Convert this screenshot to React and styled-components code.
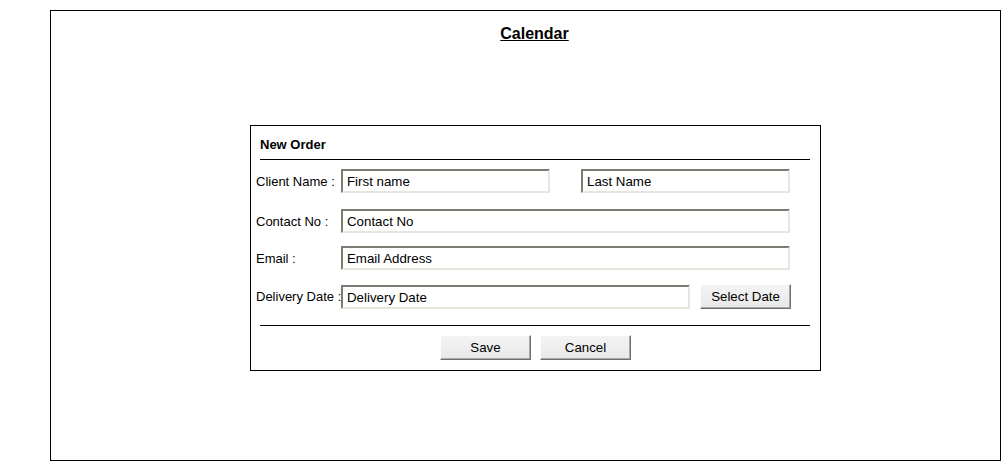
import React from "react";
import styled, { createGlobalStyle } from "styled-components";

const Global = createGlobalStyle`
  html, body { margin: 0; padding: 0; background: #fff; }
  body { font-family: "Liberation Sans", Arial, sans-serif; color: #000; }
  * { box-sizing: border-box; }
`;

const Page = styled.div`
  padding: 10px 0 0 50px;
`;

const Frame = styled.div`
  width: 951px;
  height: 451px;
  border: 1px solid #000;
  padding-left: 199px;
`;

const Column = styled.div`
  width: 571px;
`;

const Title = styled.h1`
  margin: 13px 0 0 -2px;
  font-size: 16px;
  line-height: 19px;
  font-weight: bold;
  text-decoration: underline;
  text-align: center;
`;

const Panel = styled.div`
  margin-top: 82px;
  width: 571px;
  height: 246px;
  border: 1px solid #000;
`;

const Heading = styled.div`
  margin: 0 10px 0 9px;
  padding: 11px 0 6px 0;
  font-size: 13px;
  line-height: 16px;
  font-weight: bold;
  border-bottom: 1px solid #000;
`;

const Rule = styled.div`
  margin: ${(p) => p.$top}px 10px 0 9px;
  border-top: 1px solid #000;
`;

const Row = styled.div`
  display: flex;
  align-items: center;
  margin-top: ${(p) => p.$top}px;
  padding-left: 5px;
`;

const Label = styled.label`
  width: 85px;
  flex: none;
  font-size: 13px;
  white-space: nowrap;
`;

const Field = styled.input`
  width: ${(p) => p.$w}px;
  height: 24px;
  margin-left: ${(p) => p.$gap || 0}px;
  padding: 1px 0 0 4px;
  border: 2px solid;
  border-color: #7b7b74 #e6e6dc #e6e6dc #7b7b74;
  background: #fff;
  font-family: "Liberation Sans", Arial, sans-serif;
  font-size: 13.3px;
  color: #000;
  outline: none;
`;

const Button = styled.button`
  width: 91px;
  height: 25px;
  margin-left: ${(p) => p.$gap || 0}px;
  padding: 0;
  border: 1px solid;
  border-color: #fdfdfd #6f6f6f #6f6f6f #fdfdfd;
  box-shadow: inset -1px -1px 0 #a8a8a8;
  background: linear-gradient(#f4f4f4, #e8e8e8);
  font-family: "Liberation Sans", Arial, sans-serif;
  font-size: 13.3px;
  color: #000;
`;

const Actions = styled.div`
  display: flex;
  justify-content: center;
  gap: 9px;
  margin-top: 9px;
`;

export default function App() {
  return (
    <>
      <Global />
      <Page>
        <Frame>
          <Column>
            <Title>Calendar</Title>
            <Panel>
              <Heading>New Order</Heading>
              <Row $top={9}>
                <Label>Client Name :</Label>
                <Field $w={209} defaultValue="First name" readOnly />
                <Field $w={209} $gap={31} defaultValue="Last Name" readOnly />
              </Row>
              <Row $top={16}>
                <Label>Contact No :</Label>
                <Field $w={449} defaultValue="Contact No" readOnly />
              </Row>
              <Row $top={13}>
                <Label>Email :</Label>
                <Field $w={449} defaultValue="Email Address" readOnly />
              </Row>
              <Row $top={14}>
                <Label>Delivery Date :</Label>
                <Field $w={349} defaultValue="Delivery Date" readOnly />
                <Button $gap={10}>Select Date</Button>
              </Row>
              <Rule $top={16} />
              <Actions>
                <Button>Save</Button>
                <Button>Cancel</Button>
              </Actions>
            </Panel>
          </Column>
        </Frame>
      </Page>
    </>
  );
}
